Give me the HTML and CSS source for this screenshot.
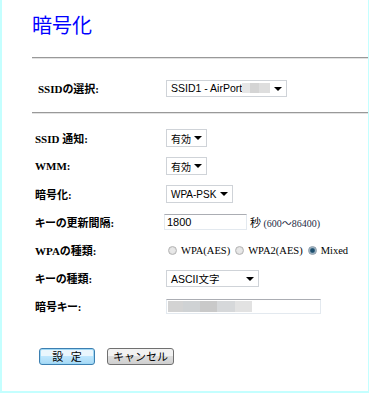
FILE: index.html
```html
<!DOCTYPE html>
<html lang="ja">

<head>
    <meta charset="UTF-8">
    <meta name="viewport" content="width=device-width, initial-scale=1.0">
    <title>暗号化</title>
    <link rel="stylesheet" href="styles.css">
</head>

<body>
    <div class="page">
        <h1 class="title">暗号化</h1>
        <hr class="rule">

        <div class="ssid-row">
            <span class="label">SSIDの選択:</span>
            <span class="pick pick-ssid">SSID1 - AirPort<span class="blur blur-ssid"></span></span>
        </div>

        <hr class="rule rule-low">

        <div class="form">
            <div class="row">
                <span class="label">SSID 通知:</span>
                <span class="pick pick-short">有効</span>
            </div>
            <div class="row">
                <span class="label">WMM:</span>
                <span class="pick pick-short">有効</span>
            </div>
            <div class="row">
                <span class="label">暗号化:</span>
                <span class="pick pick-mode">WPA-PSK</span>
            </div>
            <div class="row">
                <span class="label">キーの更新間隔:</span>
                <input type="text" class="field field-interval" value="1800">
                <span class="unit">秒 <span class="range">(600〜86400)</span></span>
            </div>
            <div class="row">
                <span class="label">WPAの種類:</span>
                <span class="radios">
                    <label class="radio"><input type="radio" name="wpa">WPA(AES)</label>
                    <label class="radio"><input type="radio" name="wpa">WPA2(AES)</label>
                    <label class="radio"><input type="radio" name="wpa" checked>Mixed</label>
                </span>
            </div>
            <div class="row">
                <span class="label">キーの種類:</span>
                <span class="pick pick-key">ASCII文字</span>
            </div>
            <div class="row">
                <span class="label">暗号キー:</span>
                <span class="field field-key"><span class="blur blur-key"></span></span>
            </div>
        </div>

        <div class="actions">
            <button class="btn btn-default">設 定</button>
            <button class="btn">キャンセル</button>
        </div>
    </div>
</body>

</html>
```

FILE: styles.css
```css
* {
    margin: 0;
    padding: 0;
    box-sizing: border-box;
}

body {
    background-color: #fff;
    color: #000;
}

.page {
    width: 369px;
    height: 393px;
    padding-left: 30px;
    border-left: 2px solid #c4ffff;
    border-right: 1px solid #c4ffff;
    border-bottom: 2px solid #c4ffff;
    overflow: hidden;
}

.title {
    height: 20px;
    margin-top: 15px;
    font-family: "Noto Sans CJK JP", sans-serif;
    font-size: 20px;
    line-height: 20px;
    font-weight: normal;
    color: #0000ff;
}

.rule {
    height: 2px;
    border: none;
    border-top: 1px solid #999;
    border-bottom: 1px solid #e2e2e2;
    margin-top: 22px;
}

.rule-low {
    margin-top: 15px;
}

.label {
    font-family: "Liberation Serif", "Noto Sans CJK JP", serif;
    font-size: 11px;
    font-weight: bold;
    font-feature-settings: "palt";
    white-space: nowrap;
}

/* select boxes drawn as boxes with an arrow */
.pick {
    position: relative;
    display: inline-flex;
    align-items: center;
    height: 18px;
    padding-left: 4px;
    border: 1px solid #cfd3d8;
    background-color: #fff;
    font-family: "Liberation Sans", "Noto Sans CJK JP", sans-serif;
    font-size: 10px;
}

.pick::after {
    content: "";
    position: absolute;
    right: 4px;
    top: 6px;
    border-left: 4px solid transparent;
    border-right: 4px solid transparent;
    border-top: 4px solid #000;
}

.pick-ssid {
    width: 121px;
    height: 17px;
    font-size: 10.5px;
}

.pick-short {
    width: 41px;
}

.pick-mode {
    width: 67px;
}

.pick-key {
    width: 93px;
    height: 17px;
    font-size: 10.5px;
}

.blur {
    display: inline-block;
}

.blur-ssid {
    width: 28px;
    height: 10px;
    background: linear-gradient(90deg, #e6e6e6 0 30%, #d4d4d4 30% 60%, #dedede 60% 100%);
}

.blur-key {
    width: 84px;
    height: 11px;
    margin-left: 1px;
    background: linear-gradient(90deg, #d3d3d3 0 18%, #cfd2d4 18% 38%, #c9c9c9 38% 58%, #d6d8da 58% 80%, #e2e2e2 80% 100%);
}

.ssid-row {
    display: flex;
    align-items: center;
    height: 18px;
    margin-top: 20px;
    padding-left: 6px;
}

.ssid-row .label {
    width: 128px;
}

.form {
    padding-top: 15px;
    padding-left: 3px;
}

.row {
    display: flex;
    align-items: center;
    height: 18px;
    margin-bottom: 10px;
}

.row .label {
    width: 131px;
}

.field {
    display: inline-flex;
    align-items: center;
    border: 1px solid #e3e9ef;
    border-top-color: #abadb3;
    background-color: #fff;
}

.field-interval {
    width: 83px;
    height: 16px;
    margin-left: -2px;
    padding-left: 2px;
    font-family: "Liberation Sans", sans-serif;
    font-size: 11px;
    outline: none;
}

.field-key {
    width: 155px;
    height: 15px;
}

.unit {
    margin-left: 3px;
    font-family: "Noto Sans CJK JP", sans-serif;
    font-size: 11px;
}

.range {
    font-family: "Liberation Serif", "Noto Sans CJK JP", serif;
    font-size: 10px;
    color: #1c2a44;
}

.radios {
    display: flex;
    gap: 5px;
    margin-left: 2px;
}

.radio {
    display: flex;
    align-items: center;
    font-family: "Liberation Serif", serif;
    font-size: 10.5px;
}

.radio input {
    appearance: none;
    width: 9px;
    height: 9px;
    margin-right: 4px;
    border: 1px solid #b4b4b4;
    border-radius: 50%;
    background: radial-gradient(circle, #e8e8e8 0 40%, #d2d2d2 100%);
}

.radio input:checked {
    border-color: #8a9aa8;
    background: radial-gradient(circle, #1d4f6e 0 35%, #9bb2c2 60%, #e0e6ea 100%);
}

.actions {
    display: flex;
    gap: 12px;
    margin-top: 33px;
    padding-left: 7px;
}

.btn {
    height: 17px;
    border: 1px solid #707070;
    border-radius: 3px;
    background: linear-gradient(#f2f2f2 0 45%, #dddddd 50%, #cfcfcf 100%);
    font-family: "Noto Sans CJK JP", sans-serif;
    font-size: 11px;
    line-height: 13px;
    color: #000;
    width: 67px;
}

.btn-default {
    width: 56px;
    word-spacing: 5px;
    border-color: #3c7fb1;
    box-shadow: inset 0 0 0 1px #9fd8f5;
    background: linear-gradient(#eaf6fd 0 45%, #bee6fd 50%, #a7d9f5 100%);
}
```
